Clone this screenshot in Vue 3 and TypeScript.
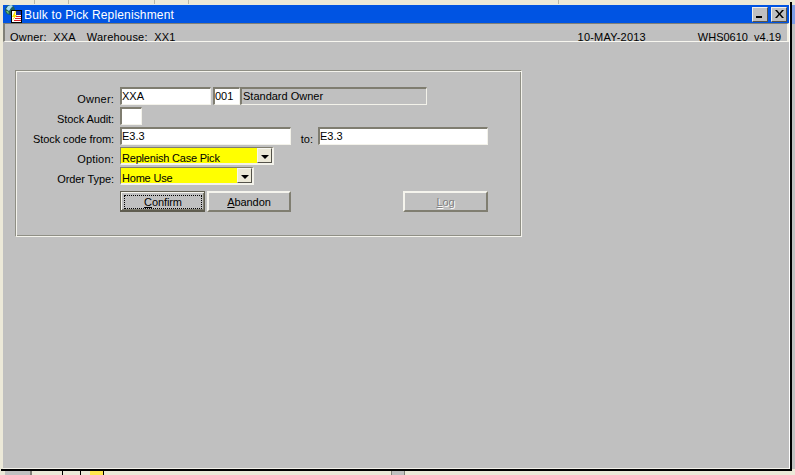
<script setup lang="ts">
interface Seg { w: number }
const topSegs: Seg[] = [{ w: 35 }, { w: 34 }, { w: 86 }, { w: 34 }, { w: 370 }]
</script>

<template>
  <div class="screen">
    <div class="top-strip">
      <span v-for="(s, i) in topSegs" :key="i" class="seg" :style="{ width: s.w + 'px' }"></span>
      <span class="top-black"></span>
    </div>
    <div class="desk">
      <div class="window">
        <div class="titlebar">
          <svg class="app-icon" width="17" height="18" viewBox="0 0 17 18">
            <circle cx="5" cy="5" r="5" fill="#1f5f5a" />
            <path d="M1 4l2-3 3-1 2 1-2 2-2 3z" fill="#a8dcf0" />
            <path d="M1 6l2 0 1 2-1 1z" fill="#6cc06c" />
            <rect x="6" y="5" width="11" height="13" fill="#000" />
            <rect x="7" y="6" width="9" height="11" fill="#fff" />
            <rect x="11" y="6" width="5" height="4" fill="#1a2f9c" />
            <path d="M11 11h5v1h-5zM10 13h6v1h-6zM9 15h7v1H9z" fill="#d8232a" />
            <path d="M10 6L7 12h2l-2 4 5-6h-2l1-4z" fill="#ffe600" />
          </svg>
          <span class="title">Bulk to Pick Replenishment</span>
          <button class="cap-btn" type="button">
            <svg width="8" height="8" viewBox="0 0 8 8"><rect x="0" y="6" width="6" height="2" fill="#000" /></svg>
          </button>
          <button class="cap-btn close" type="button">
            <svg width="9" height="8" viewBox="0 0 9 8"><path d="M0 0h2l2.500 3L7 0h2L5.500 4 9 8H7L4.500 5 2 8H0l3.500-4z" fill="#000" /></svg>
          </button>
        </div>
        <div class="status">
          <span class="st-owner">Owner:&nbsp; XXA</span>
          <span class="st-wh">Warehouse:&nbsp; XX1</span>
          <span class="st-date">10-MAY-2013</span>
          <span class="st-code">WHS0610&nbsp; v4.19</span>
        </div>
        <div class="content">
          <section class="panel">
            <div class="row">
              <label class="lbl lbl-wide">Owner:</label>
              <span class="field owner">XXA</span>
              <span class="field num">001</span>
              <span class="field ro">Standard Owner</span>
            </div>
            <div class="row">
              <label class="lbl">Stock Audit:</label>
              <span class="field check"></span>
            </div>
            <div class="row">
              <label class="lbl">Stock code from:</label>
              <span class="field code">E3.3</span>
              <label class="lbl-to">to:</label>
              <span class="field code to">E3.3</span>
            </div>
            <div class="row">
              <label class="lbl lbl-wide">Option:</label>
              <span class="select opt">
                <span class="sel-text">Replenish Case Pick</span>
                <span class="arrow"><i></i></span>
              </span>
            </div>
            <div class="row">
              <label class="lbl">Order Type:</label>
              <span class="select ord">
                <span class="sel-text">Home Use</span>
                <span class="arrow"><i></i></span>
              </span>
            </div>
            <div class="btn-row">
              <button class="btn default" type="button"><span class="focus"><u>C</u>onfirm</span></button>
              <button class="btn abandon" type="button"><u>A</u>bandon</button>
              <button class="btn disabled" type="button"><u>L</u>og</button>
            </div>
          </section>
        </div>
      </div>
      <div class="black-edge"></div>
      <div class="side-strip"></div>
    </div>
    <div class="bottom-edge"></div>
    <div class="bottom-strip">
      <span class="b b1"></span>
      <span class="b b1a"></span>
      <span class="b b2"></span>
      <span class="b b3"></span>
      <span class="b b4"></span>
      <span class="b b5"></span>
      <span class="b b6"></span>
      <span class="b b7"></span>
      <span class="b b8"></span>
    </div>
  </div>
</template>

<style>
html, body { margin: 0; padding: 0; background: #ece9d8; }
</style>

<style scoped>
.screen {
  width: 795px;
  height: 475px;
  overflow: hidden;
  display: flex;
  flex-direction: column;
  background: #ece9d8;
  font-family: "Liberation Sans", Arial, sans-serif;
  font-size: 11px;
  color: #000;
}
.top-strip {
  height: 5px;
  display: flex;
  flex: none;
  background: #ece9d8;
}
.seg { border-right: 1px solid #b9b7a6; box-sizing: border-box; height: 4px; }
.top-black {
  width: 2px;
  height: 3px;
  margin: 2px 0 0 231px;
  background: #000;
}
.desk {
  display: flex;
  height: 464px;
  flex: none;
}
.window {
  margin-left: 3px;
  width: 787px;
  display: flex;
  flex-direction: column;
  background: #c0c0c0;
  border-right: 1px solid #fff;
  border-bottom: 1px solid #f4f3ec;
  box-sizing: border-box;
}
.titlebar {
  height: 18px;
  background: #0054e3;
  display: flex;
  align-items: center;
  padding: 0 2px 0 2px;
  flex: none;
}
.app-icon { flex: none; }
.title {
  color: #fff;
  font-size: 12px;
  letter-spacing: 0.15px;
  margin: 2px 0 0 2px;
  flex: 1;
  white-space: nowrap;
}
.cap-btn {
  width: 16px;
  height: 15px;
  padding: 0;
  margin-left: 3px;
  background: #c0c0c0;
  box-sizing: border-box;
  border: 1px solid;
  border-color: #f2f1ea #55534a #55534a #f2f1ea;
  display: flex;
  align-items: center;
  justify-content: center;
}
.status {
  height: 19px;
  flex: none;
  box-sizing: border-box;
  display: flex;
  align-items: flex-start;
  background: #c0c0c0;
  border-top: 1px solid #808078;
  border-left: 2px solid #808078;
  border-right: 2px solid #f1efe2;
  border-bottom: 1px solid #f8f7f0;
  padding-top: 7px;
  line-height: 13px;
  white-space: nowrap;
  letter-spacing: 0.2px;
}
.st-owner { margin-left: 5px; }
.st-wh { margin-left: 11px; }
.st-date { margin-left: auto; margin-right: 52px; }
.st-code { margin-right: 6px; letter-spacing: 0; }
.content {
  flex: 1;
  padding: 28px 0 0 12px;
  background: #c0c0c0;
}
.panel {
  width: 507px;
  height: 167px;
  box-sizing: border-box;
  border: 1px solid;
  border-color: #8f8f85 #f4f3ec #f4f3ec #8f8f85;
  box-shadow: inset 1px 1px 0 #f4f3ec, inset -1px -1px 0 #8f8f85;
  padding: 16px 0 0 0;
  display: flex;
  flex-direction: column;
  gap: 2px;
}
.row {
  height: 18px;
  display: flex;
  align-items: stretch;
}
.lbl {
  width: 98px;
  text-align: right;
  flex: none;
  padding-top: 5px;
  line-height: 14px;
  letter-spacing: -0.1px;
  white-space: nowrap;
  margin-right: 6px;
}
.lbl-wide { letter-spacing: 0.2px; }
.field {
  box-sizing: border-box;
  height: 18px;
  background: #fff;
  border: solid;
  border-color: #7f7d70 #f3f2ea #f3f2ea #7f7d70;
  border-width: 2px 1px 1px 2px;
  padding-left: 0;
  line-height: 15px;
  white-space: nowrap;
  overflow: hidden;
}
.owner { width: 91px; }
.num { width: 27px; margin-left: 2px; }
.ro {
  width: 187px;
  background: #c0c0c0;
  padding-left: 1px;
}
.check { width: 22px; }
.code { width: 171px; }
.lbl-to {
  width: 22px;
  text-align: right;
  padding: 5px 0 0 0;
  line-height: 14px;
  margin-right: 5px;
  flex: none;
  box-sizing: border-box;
}
.to { width: 170px; }
.select {
  box-sizing: border-box;
  height: 18px;
  display: flex;
  background: #ffff00;
  border: solid;
  border-color: #7f7d70 #f3f2ea #f3f2ea #7f7d70;
  border-width: 1px 2px 2px 1px;
}
.opt { width: 154px; }
.ord { width: 134px; }
.sel-text {
  flex: 1;
  padding: 4px 0 0 1px;
  line-height: 13px;
  letter-spacing: -0.2px;
  white-space: nowrap;
}
.arrow {
  width: 15px;
  box-sizing: border-box;
  background: #ece9d8;
  border: 1px solid;
  border-color: #f8f7f0 #55534a #55534a #f8f7f0;
  display: flex;
  align-items: center;
  justify-content: center;
}
.arrow i {
  width: 0;
  height: 0;
  margin-top: 2px;
  border-left: 4px solid transparent;
  border-right: 4px solid transparent;
  border-top: 4px solid #000;
}
.btn-row {
  display: flex;
  margin-top: 4px;
  padding-left: 104px;
}
.btn {
  height: 21px;
  width: 85px;
  padding: 1px 0 0 0;
  box-sizing: border-box;
  background: #c0c0c0;
  font: inherit;
  letter-spacing: -0.1px;
  color: #000;
  border: 2px solid;
  border-color: #f5f4ed #807e71 #807e71 #f5f4ed;
  margin-right: 2px;
}
.abandon { width: 84px; }
.btn.default {
  border: 1px solid #5f5d50;
  border-bottom-width: 2px;
  box-shadow: inset 1px 1px 0 #f5f4ed, inset -1px -1px 0 #807e71;
  padding: 0;
  display: block;
}
.focus {
  display: block;
  margin: 2px 2px 0 3px;
  height: 14px;
  line-height: 13px;
  box-sizing: border-box;
  border: 1px dotted #000;
}
.btn.disabled {
  margin-left: 110px;
  margin-right: 0;
  color: #808080;
  text-shadow: 1px 1px 0 #fff;
}
.black-edge {
  width: 2px;
  background: #000;
  flex: none;
}
.side-strip {
  flex: 1;
  background: linear-gradient(#7f9ee6 0, #7f9ee6 19px, #c0c0c0 19px);
}
.bottom-edge {
  height: 2px;
  flex: none;
  margin-left: 1px;
  width: 791px;
  background: #000;
}
.bottom-strip {
  flex: 1;
  display: flex;
  background: #ece9d8;
}
.b { display: block; height: 100%; box-sizing: border-box; }
.b1 { width: 25px; background: #c0c0c0; margin-left: 5px; }
.b1a { width: 5px; background: #ece9d8; border-left: 2px solid #808078; }
.b2 { width: 28px; border-right: 1px solid #000; }
.b3 { width: 18px; border-right: 1px solid #000; }
.b4 { width: 9px; }
.b5 { width: 14px; background: #ffe64d; border-right: 1px solid #000; }
.b6 { width: 287px; }
.b7 { width: 14px; background: #c0c0c0; border-left: 1px solid #808078; border-right: 1px solid #808078; }
.b8 { flex: 1; }
</style>
